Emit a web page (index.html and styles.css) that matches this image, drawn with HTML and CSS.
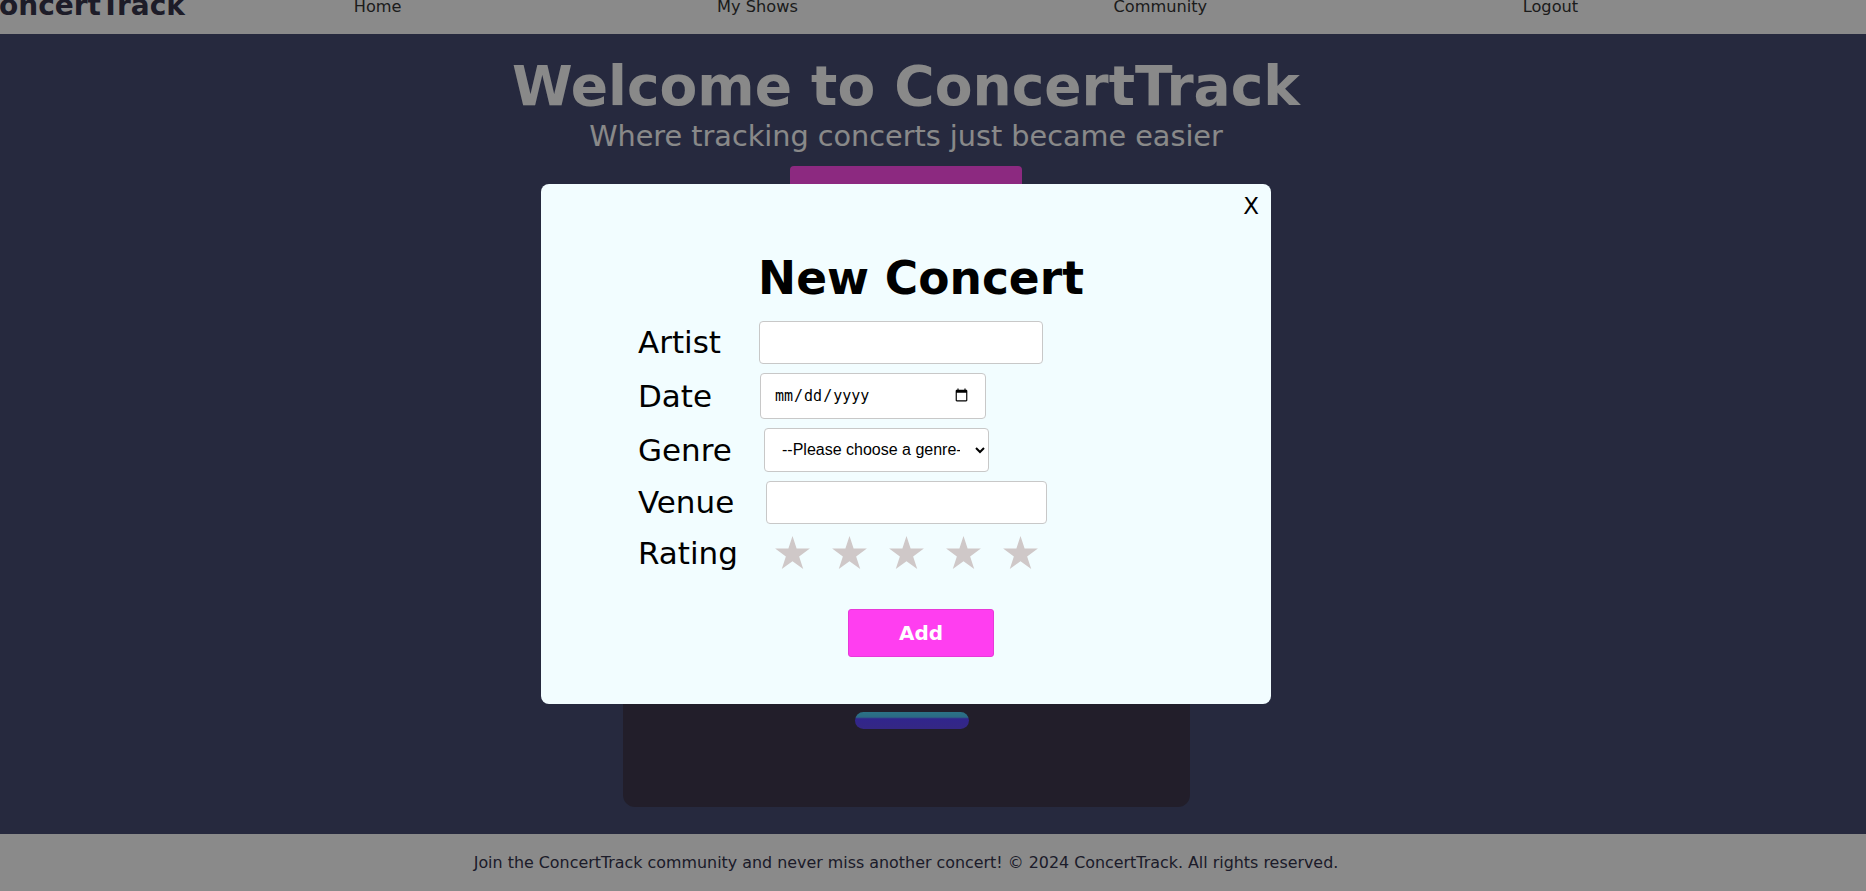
FILE: index.html
```html
<!DOCTYPE html>
<html lang="en">
<head>
<meta charset="utf-8">
<title>ConcertTrack</title>
<link rel="stylesheet" href="styles.css">
</head>
<body>
  <header class="nav">
    <a class="logo" href="#">ConcertTrack</a>
    <ul class="nav-links">
      <li><a href="#">Home</a></li>
      <li><a href="#">My Shows</a></li>
      <li><a href="#">Community</a></li>
      <li><a href="#">Logout</a></li>
    </ul>
  </header>

  <main class="hero">
    <h1 class="hero-title">Welcome to ConcertTrack</h1>
    <p class="hero-sub">Where tracking concerts just became easier</p>
    <button class="hero-btn" type="button">Add Concert</button>
    <section class="card">
      <span class="card-pill"></span>
    </section>
  </main>

  <footer class="footer">
    <p>Join the ConcertTrack community and never miss another concert! © 2024 ConcertTrack. All rights reserved.</p>
  </footer>

  <div class="overlay">
    <div class="modal">
      <button class="modal-close" type="button">X</button>
      <h2 class="modal-title">New Concert</h2>
      <form class="form">
        <div class="row">
          <label class="label" for="artist">Artist</label>
          <input class="field field-artist" id="artist" type="text">
        </div>
        <div class="row">
          <label class="label" for="date">Date</label>
          <input class="field field-date" id="date" type="date">
        </div>
        <div class="row">
          <label class="label" for="genre">Genre</label>
          <select class="field field-genre" id="genre">
            <option>--Please choose a genre--</option>
          </select>
        </div>
        <div class="row row-venue">
          <label class="label" for="venue">Venue</label>
          <input class="field field-venue" id="venue" type="text">
        </div>
        <div class="row row-rating">
          <span class="label">Rating</span>
          <div class="stars">
            <svg class="star" viewBox="0 0 100 95"><polygon points="50,0 61.8,36.3 100,36.3 69.1,58.8 80.9,95 50,72.7 19.1,95 30.9,58.8 0,36.3 38.2,36.3"/></svg>
            <svg class="star" viewBox="0 0 100 95"><polygon points="50,0 61.8,36.3 100,36.3 69.1,58.8 80.9,95 50,72.7 19.1,95 30.9,58.8 0,36.3 38.2,36.3"/></svg>
            <svg class="star" viewBox="0 0 100 95"><polygon points="50,0 61.8,36.3 100,36.3 69.1,58.8 80.9,95 50,72.7 19.1,95 30.9,58.8 0,36.3 38.2,36.3"/></svg>
            <svg class="star" viewBox="0 0 100 95"><polygon points="50,0 61.8,36.3 100,36.3 69.1,58.8 80.9,95 50,72.7 19.1,95 30.9,58.8 0,36.3 38.2,36.3"/></svg>
            <svg class="star" viewBox="0 0 100 95"><polygon points="50,0 61.8,36.3 100,36.3 69.1,58.8 80.9,95 50,72.7 19.1,95 30.9,58.8 0,36.3 38.2,36.3"/></svg>
          </div>
        </div>
        <div class="actions">
          <button class="add-btn" type="button">Add</button>
        </div>
      </form>
    </div>
  </div>
</body>
</html>
```

FILE: styles.css
```css
* { box-sizing: border-box; }

html, body {
  margin: 0;
  padding: 0;
  height: 891px;
  overflow: hidden;
}

body {
  font-family: "DejaVu Sans", "Liberation Sans", sans-serif;
  display: flex;
  flex-direction: column;
  background: #454c71;
}

/* NAV */
.nav {
  height: 34px;
  flex: 0 0 34px;
  background: #fbfbfb;
  display: flex;
  align-items: flex-start;
  overflow: hidden;
}

.logo {
  font-weight: bold;
  font-size: 28px;
  line-height: 28px;
  color: #36334a;
  text-decoration: none;
  margin-left: -21.5px;
  margin-top: -7.7px;
  white-space: nowrap;
}

.nav-links {
  list-style: none;
  margin: -3.5px 0 0 11px;
  padding: 0;
  width: 1540px;
  display: flex;
  justify-content: space-around;
}

.nav-links a {
  font-size: 16.2px;
  line-height: 16px;
  color: #333;
  text-decoration: none;
}

/* HERO */
.hero {
  flex: 1;
  display: flex;
  flex-direction: column;
  align-items: center;
  padding: 19px 54px 27px 0;
  color: #fafafa;
}

.hero-title {
  margin: 0;
  font-size: 55px;
  line-height: 66px;
  font-weight: bold;
}

.hero-sub {
  margin: 0;
  font-size: 28.7px;
  line-height: 34.2px;
}

.hero-btn {
  margin-top: 12.8px;
  width: 232px;
  height: 64px;
  border: none;
  border-radius: 4px;
  background: #ff4ce9;
  color: #fff;
  font-family: inherit;
  font-size: 20px;
  font-weight: bold;
}

.card {
  margin-top: 16px;
  width: 567px;
  flex: 1;
  border-radius: 12px;
  background: #3e384e;
  display: flex;
  flex-direction: column;
  justify-content: flex-end;
  align-items: center;
  padding: 0 0 78px 11px;
}

.card-pill {
  display: block;
  width: 114px;
  height: 17px;
  border-radius: 9px;
  background: linear-gradient(#4fd0f5 0%, #4fc0f0 30%, #5a44ff 40%, #6048f0 100%);
}

/* FOOTER */
.footer {
  flex: 0 0 57px;
  background: #fbfbfb;
  display: flex;
  align-items: center;
  justify-content: center;
  padding-right: 54px;
}

.footer p {
  margin: 0;
  font-size: 15.9px;
  color: #33334c;
}

/* MODAL */
.overlay {
  position: fixed;
  inset: 0;
  background: rgba(0, 0, 0, 0.45);
  display: flex;
  justify-content: center;
  align-items: flex-start;
  padding: 184px 54px 0 0;
}

.modal {
  position: relative;
  width: 730px;
  background: #f2fdff;
  border-radius: 8px;
  padding: 68px 0 47px 30px;
}

.modal-close {
  position: absolute;
  top: 11.4px;
  right: 12px;
  border: none;
  background: none;
  padding: 0;
  font-family: inherit;
  font-size: 23px;
  line-height: 23px;
  color: #000;
}

.modal-title {
  margin: 0;
  text-align: center;
  font-size: 45.5px;
  line-height: 53px;
  font-weight: bold;
  color: #000;
}

.form {
  margin: 15.8px 0 0 0;
}

.row {
  display: flex;
  align-items: center;
  margin: 0 0 9px 67px;
}

.row-venue { margin-bottom: 7px; }

.label {
  width: 121px;
  font-size: 31px;
  color: #000;
}

.field {
  border: 1px solid #c8c8c8;
  border-radius: 4px;
  background: #fff;
  margin: 0;
}

.field-artist { width: 284px; height: 43px; }

.field-date {
  width: 226px;
  height: 46px;
  margin-left: 1px;
  padding: 0 14px 0 13px;
  font-family: "DejaVu Sans Mono", monospace;
  font-size: 15px;
  color: #000;
}

.field-genre {
  width: 225px;
  height: 44px;
  margin-left: 5px;
  padding: 0 12px 0 13px;
  font-family: "Liberation Sans", Arial, sans-serif;
  font-size: 16px;
  color: #000;
}

.field-venue { width: 281px; height: 43px; margin-left: 7px; }

.row-rating { height: 44px; }

.stars {
  display: flex;
  gap: 22px;
  margin-left: 16px;
}

.star {
  width: 35px;
  height: 33px;
  fill: #cfc8c8;
}

.actions {
  display: flex;
  justify-content: center;
  margin-top: 34px;
}

.add-btn {
  width: 146px;
  height: 48px;
  border: 1px solid #e83ad8;
  border-radius: 3px;
  background: #ff3ef0;
  color: #fff;
  font-family: inherit;
  font-size: 20px;
  font-weight: bold;
}
```
